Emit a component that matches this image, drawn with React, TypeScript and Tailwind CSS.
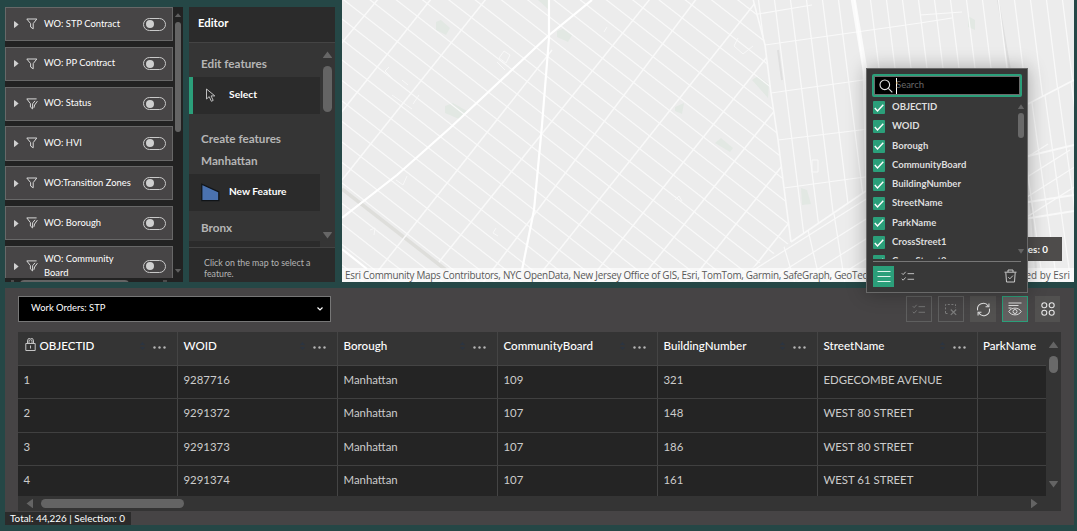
import React from "react";

type Pt = [number, number];

const filters: { name: string; edit?: boolean; wrap?: boolean }[] = [
  { name: "WO: STP Contract" },
  { name: "WO: PP Contract" },
  { name: "WO: Status", edit: true },
  { name: "WO: HVI" },
  { name: "WO:Transition Zones" },
  { name: "WO: Borough", edit: true },
  { name: "WO: Community Board", edit: true, wrap: true },
];

const fields = [
  "OBJECTID",
  "WOID",
  "Borough",
  "CommunityBoard",
  "BuildingNumber",
  "StreetName",
  "ParkName",
  "CrossStreet1",
  "CrossStreet2",
];

const columns = ["OBJECTID", "WOID", "Borough", "CommunityBoard", "BuildingNumber", "StreetName"];

const rows = [
  ["1", "9287716", "Manhattan", "109", "321", "EDGECOMBE AVENUE"],
  ["2", "9291372", "Manhattan", "107", "148", "WEST 80 STREET"],
  ["3", "9291373", "Manhattan", "107", "186", "WEST 80 STREET"],
  ["4", "9291374", "Manhattan", "107", "161", "WEST 61 STREET"],
];

function Arrow({ dir, className }: { dir: "up" | "down" | "left" | "right"; className: string }) {
  const d = {
    up: "M4.5 0.5 L9 6.5 Q9 7 8.5 7 H.5 Q0 7 0 6.5Z",
    down: "M4.5 6.5 L9 .5 Q9 0 8.5 0 H.5 Q0 0 0 .5Z",
    left: "M.5 4.5 L6.5 0 Q7 0 7 .5 V8.5 Q7 9 6.5 9Z",
    right: "M6.5 4.5 L.5 0 Q0 0 0 .5 V8.5 Q0 9 .5 9Z",
  }[dir];
  const box = dir === "up" || dir === "down" ? "0 0 9 7" : "0 0 7 9";
  return (
    <svg viewBox={box} className={className} fill="currentColor" preserveAspectRatio="none">
      <path d={d} />
    </svg>
  );
}

function Funnel({ edit }: { edit?: boolean }) {
  return (
    <svg viewBox="0 0 12 12" className="ml-[7px] h-3 w-3 shrink-0" fill="none" stroke="#d8d8d8" strokeWidth="1">
      {edit ? (
        <path d="M10.6.9H.8L4.4 5.6V9l2.2 1.9V5.8L9 2.8M11.4 3.2 8.6 7 7.9 9.8" />
      ) : (
        <path d="M.8 1h10L7.2 5.6v5.2L4.6 9V5.6z" />
      )}
    </svg>
  );
}

function Toggle() {
  return (
    <div className="mr-[6px] ml-auto flex h-[13px] w-[23px] shrink-0 items-center rounded-full border border-[#c9c9c9] pl-[2px]">
      <div className="h-2 w-2 rounded-full bg-[#cfcfcf]" />
    </div>
  );
}

function FilterPanel() {
  return (
    <div className="flex h-[275px] w-[178px] shrink-0 flex-col overflow-hidden bg-[#222222]">
      <div className="flex h-[271px] overflow-hidden">
        <div className="flex w-[168px] flex-col gap-[5.6px]">
          {filters.map((f) => (
            <div
              key={f.name}
              className={
                "flex w-[168px] shrink-0 items-center border border-[#686868] bg-[#474546] pl-[8px] " +
                (f.wrap ? "h-[41px]" : "h-[34.2px]")
              }
            >
              <Arrow dir="right" className="h-[7px] w-[5px] shrink-0 text-[#d0d0d0]" />
              <Funnel edit={f.edit} />
              <span className="-mt-px ml-[6px] w-[91px] text-[9.4px] leading-[14px] text-white">{f.name}</span>
              <Toggle />
            </div>
          ))}
        </div>
        <div className="flex w-[10px] flex-col items-center text-[#5f5f5f]">
          <Arrow dir="up" className="mt-[6px] h-[4px] w-[6px]" />
          <div className="mt-[5px] h-[110px] w-[6px] rounded-full bg-[#646464]" />
          <Arrow dir="down" className="mt-auto mb-[5px] h-[4px] w-[6px]" />
        </div>
      </div>
      <div className="flex h-[4px] items-start pt-[2px]">
        <div className="ml-[6px] h-[2px] w-[3px] bg-[#4c4c4c]" />
        <div className="ml-[6px] h-[4px] w-[109px] rounded-t-full bg-[#646464]" />
        <div className="ml-[34px] h-[2px] w-[4px] bg-[#4c4c4c]" />
      </div>
    </div>
  );
}

function EditorPanel() {
  return (
    <div className="ml-[6px] flex h-[275px] w-[146px] shrink-0 flex-col bg-[#353535]">
      <div className="flex h-[36px] shrink-0 items-center border-b border-[#444444] bg-[#2b2b2b] pl-[9px] text-[11.3px] font-bold text-white">
        <span className="-mt-[3px]">Editor</span>
      </div>
      <div className="flex h-[204px] shrink-0 overflow-hidden">
        <div className="flex w-[131px] flex-col text-[11.7px] font-bold text-[#b5b5b5]">
          <div className="h-[34px] shrink-0 pl-[12px] leading-[40px]">Edit features</div>
          <div className="flex h-[37px] shrink-0 items-center border-l-4 border-[#2b9f7a] bg-[#2b2b2b] pl-[12px]">
            <svg viewBox="0 0 13 15" className="h-[15px] w-[13px]" fill="none" stroke="#c0c0c0">
              <path d="M1.5 1v10l2.7-2.4 2.2 4.7 1.8-.9-2.1-4.5h3.7z" />
            </svg>
            <span className="-mt-px ml-[11px] text-[10.3px] text-white">Select</span>
          </div>
          <div className="h-[39px] shrink-0 pt-[4px] pl-[12px] leading-[41px]">Create features</div>
          <div className="h-[21px] shrink-0 pl-[12px] leading-[14px]">Manhattan</div>
          <div className="flex h-[37px] shrink-0 items-center bg-[#2b2b2b] pl-[12px]">
            <svg viewBox="0 0 19 19" className="h-[19px] w-[19px]">
              <path d="M.8 1.2v16.5h17V9z" fill="#4a72b0" stroke="#101418" strokeWidth="1.2" />
            </svg>
            <span className="-mt-px ml-[9px] text-[10.1px] text-white">New Feature</span>
          </div>
          <div className="h-[30px] shrink-0 pl-[12px] leading-[32px]">Bronx</div>
          <div className="h-[6px] shrink-0 bg-[#2b2b2b]" />
        </div>
        <div className="flex w-[15px] flex-col items-center text-[#666666]">
          <Arrow dir="up" className="mt-[8px] h-[7px] w-[9px]" />
          <div className="mt-[8px] h-[46px] w-[9px] rounded-full bg-[#646464]" />
          <Arrow dir="down" className="mt-auto mb-[8px] h-[7px] w-[9px]" />
        </div>
      </div>
      <div className="h-[35px] border-t border-[#444444] bg-[#2b2b2b] pt-[9px] pl-[15px] text-[8.8px] leading-[11px] text-[#b5b5b5]">
        Click on the map to select a<br />
        feature.
      </div>
    </div>
  );
}

function range(n: number) {
  return Array.from({ length: n }, (_, i) => i);
}

const avenues: [Pt, Pt][] = [
  [[-2, 45], [37, -2]],
  [[-2, 114], [93, -6]],
  [[0, 180], [148, -6]],
  [[32, 276], [210, 50]],
  [[97, 262], [312, -6]],
  [[140, 284], [358, -6]],
  [[195, 278], [425, -12]],
  [[243, 286], [475, -6]],
  [[290, 290], [535, -18]],
  [[342, 290], [560, 14]],
  [[394, 290], [610, 16]],
];

function Basemap() {
  return (
    <svg viewBox="0 0 732 282" className="block h-[282px] w-[732px]" fill="none" stroke="#f9f9f9">
      <defs>
        <clipPath id="west">
          <path d="M0 0H411L423 45L429 93L436 140L442 188L449 242L390 282H0Z" />
        </clipPath>
        <clipPath id="east">
          <path d="M411 0L423 45L429 93L436 140L442 188L449 242L540 180L732 80V0Z" />
        </clipPath>
        <clipPath id="south">
          <path d="M449 242L540 180L732 80V282H390Z" />
        </clipPath>
      </defs>
      <rect width="732" height="282" fill="#ececec" stroke="none" />
      <g fill="#e2e8e3" stroke="none">
        <path d="M94 22l5-2 9 8-4 7-10-5zM103 106l8-3 14 8-8 8-14-6zM215 31l6-2 9 6-4 7-11-5zM196 0h10v9zM333 107l9-4-2 11-7-3z" />
        <path d="M410 80l6-4 11 8-1 14zM373 143l6-5 12 10-3 4zM626 16l7 4v10l-7-3zM459 188l6 2 4 14-9 1z" />
      </g>
      <path d="M0 189 104 270" stroke="#dededb" strokeWidth="3.5" />
      <path d="M656 0 668 70 690 215 694 270M436 50 440 80" stroke="#dfdfdf" strokeWidth="2" />
      <g clipPath="url(#west)">
        <g strokeWidth="1.2">
          {range(48).map((i) => {
            const y = -350 + i * 20.5;
            return <path key={i} d={`M0 ${y}L460 ${y + 359}`} />;
          })}
        </g>
        <g strokeWidth="1.5">
          {avenues.map((a, i) => (
            <path key={i} d={`M${a[0][0]} ${a[0][1]}L${a[1][0]} ${a[1][1]}`} />
          ))}
        </g>
      </g>
      <g clipPath="url(#east)" strokeWidth="1.2">
        {range(22).map((i) => (
          <path key={i} d={`M${400 + i * 16} -4L${436 + i * 16} 284`} />
        ))}
        <path d="M423 45 578 23 610 18M429 93 535 78M436 140 535 128M442 188 530 176M578 15 620 12M410 15 470 5" />
      </g>
      <g clipPath="url(#south)" strokeWidth="1.2">
        {range(7).map((i) => (
          <path key={i} d={`M${380 + i * 22} ${290 + i * 6}L${640 + i * 22} ${126 + i * 6}`} />
        ))}
        {range(15).map((i) => (
          <path key={i} d={`M${600 + i * 14} 60L${632 + i * 14} 290`} />
        ))}
        <path d="M440 240 455 290M466 230 480 290M492 214 504 290" />
        <path d="M680 203 732 195M682 219 732 211M670 160 732 145" strokeWidth="2" />
      </g>
      <path d="M449 242 540 180 732 80M411-1 423 45 429 93 436 140 442 188 449 242" strokeWidth="1.6" />
      <path d="M511-2 523 70 526 190" stroke="#fff" strokeWidth="5" strokeOpacity=".8" />
      <path d="M0 218 55 175 108 128 206 36 250 0" stroke="#fff" strokeWidth="2.2" />
      <path d="M207 0V38L200 125 192 210 180 270" stroke="#fff" strokeWidth="2.2" />
      <path d="M0 249 25 269" stroke="#fff" strokeWidth="2.2" />
      <g stroke="#f8f8f8" strokeWidth="1">
        <path d="M47 67l-4 4 8 8M60 80l6 5M50 95l20 14M77 95l-6 9M54 180l7 5 4-9M28 230l5-2-1 7M154 228l-3 5 5 3M265 27l-3 5M396 38l-4 8 9 8 10-8M470 160h6v12h-6zM333 200l4-4 3 5" />
        <path d="M157 58l5-7 6 4-4 8zM155 62l8 8" />
      </g>
    </svg>
  );
}

function MapView() {
  return (
    <div className="relative ml-[7px] h-[282px] w-[732px] shrink-0 overflow-hidden">
      <Basemap />
      <div className="absolute right-[12px] bottom-[21px] flex h-[24px] w-[90px] items-center justify-end bg-[#4e4c4b] pr-[14px] text-[9.8px] font-bold text-white">
        Features: 0
      </div>
      <div className="absolute bottom-0 left-0 flex h-[14px] w-[732px] items-center justify-between bg-white/65 pr-[4px] pl-[3px] font-['Open_Sans',sans-serif] text-[9.9px] tracking-[-0.26px] whitespace-nowrap text-[#595959]">
        <span>Esri Community Maps Contributors, NYC OpenData, New Jersey Office of GIS, Esri, TomTom, Garmin, SafeGraph, GeoTec</span>
        <span className="tracking-normal">Powered by Esri</span>
      </div>
    </div>
  );
}

function ListCheck({ className }: { className: string }) {
  return (
    <svg viewBox="0 0 15 12" className={className} fill="none" stroke="currentColor">
      <path d="M.8 3 2.3 4.5 5 1.5M.8 9 2.3 10.5 5 7.5M7 3.5h7M7 9.5h7" />
    </svg>
  );
}

function ColumnPopup() {
  return (
    <div className="absolute top-[68px] left-[866px] flex h-[225px] w-[162px] flex-col border border-[#696969] bg-[#383838] pl-[5px] shadow-[0_0_18px_rgba(0,0,0,0.3)]">
      <div className="mt-[5px] flex h-[23px] w-[150px] shrink-0 items-center rounded-[2px] border-2 border-[#2b9f7a] bg-black">
        <div className="flex h-full w-full items-center border border-[#6b6b6b] pl-[4px]">
          <svg viewBox="0 0 14 14" className="h-[14px] w-[14px]" fill="none" stroke="#e6e6e6" strokeWidth="1.1">
            <circle cx="5.8" cy="5.8" r="4.8" />
            <path d="m9.3 9.3 4 4" />
          </svg>
          <div className="ml-[3px] h-4 w-px bg-white" />
          <span className="-ml-px text-[9.5px] text-[#686868]">Search</span>
        </div>
      </div>
      <div className="mt-[2px] flex h-[160px] shrink-0">
        <div className="flex w-[145px] flex-col overflow-hidden pl-px">
          {fields.map((f) => (
            <div key={f} className="flex h-[19.3px] shrink-0 items-start">
              <div className="mt-[2px] flex h-[13px] w-[12px] items-center justify-center rounded-[1px] bg-[#2b9f7a]">
                <svg viewBox="0 0 10 8" className="h-[8px] w-[10px]" fill="none" stroke="#fff" strokeWidth="1.4">
                  <path d="m.8 4 2.7 3L9.3.8" />
                </svg>
              </div>
              <span className="ml-[7px] text-[9.5px] leading-[16px] font-bold text-[#dedede]">{f}</span>
            </div>
          ))}
        </div>
        <div className="flex w-[12px] flex-col items-center text-[#646464]">
          <Arrow dir="up" className="mt-[5px] h-[5px] w-[6px]" />
          <div className="mt-[4px] h-[25px] w-[6px] rounded-full bg-[#696969]" />
          <Arrow dir="down" className="mt-auto mb-[5px] h-[5px] w-[6px]" />
        </div>
      </div>
      <div className="mt-[2px] ml-px h-px w-[148px] shrink-0 bg-[#777777]" />
      <div className="mt-[3px] ml-px flex h-[22px] items-center">
        <div className="flex h-[21px] w-[21px] items-center justify-center bg-[#2b9f7a]">
          <svg viewBox="0 0 14 12" className="h-[12px] w-[14px]" stroke="#dff3ec">
            <path d="M.5 1.5h13M.5 6.5h13M.5 11.5h13" />
          </svg>
        </div>
        <ListCheck className="ml-[7px] h-[12px] w-[14px] text-[#c9c9c9]" />
        <svg viewBox="0 0 13 14" className="mr-[10px] ml-auto h-[14px] w-[13px]" fill="none" stroke="#c9c9c9">
          <path d="M.5 3.2h12M4 3V1h5v2M1.8 3.5 2.5 13h8l.7-9.5M4.3 8.2l1.6 1.6 3-3.2" />
        </svg>
      </div>
    </div>
  );
}

function Toolbar() {
  const base = "flex h-[26px] w-[26px] items-center justify-center ";
  return (
    <div className="ml-auto flex gap-[6px] pr-[14px]">
      <div className={base + "border border-[#5f5f5f]"}>
        <ListCheck className="h-[12px] w-[14px] text-[#777777]" />
      </div>
      <div className={base + "border border-[#5f5f5f]"}>
        <svg viewBox="0 0 14 14" className="h-[14px] w-[14px]" fill="none" stroke="#7c7c7c">
          <path d="M1.5 11V2.5h10V6" strokeDasharray="2 1.6" />
          <path d="M1.5 11.5h3" strokeDasharray="2 1" />
          <path d="m6.8 7.5 5.4 5.4m0-5.4-5.4 5.4" strokeWidth="1.2" />
        </svg>
      </div>
      <div className={base + "bg-[#525150]"}>
        <svg viewBox="0 0 16 16" className="h-[15px] w-[15px]" fill="none" stroke="#e0e0e0" strokeWidth="1.1">
          <path d="M1.8 9A6.2 6.2 0 0 1 13 4.2M14.2 7A6.2 6.2 0 0 1 3 11.8" />
          <path d="M13.8 1.5v3.6h-3.6M2.2 14.5v-3.6h3.6" />
        </svg>
      </div>
      <div className={base + "border border-[#2b9f7a] bg-[#626060]"}>
        <svg viewBox="0 0 14 14" className="h-[14px] w-[14px]" fill="none" stroke="#dcdcdc">
          <path d="M.5 1h13M.5 3.5h10M.5 6h3" />
          <path d="M.8 9.5C3.5 5 10.5 5 13.2 9.5 10.5 14 3.5 14 .8 9.5z" />
          <circle cx="7" cy="9.5" r="2" />
        </svg>
      </div>
      <div className="ml-px flex h-[26px] w-[25px] items-center justify-center bg-[#525150]">
        <svg viewBox="0 0 14 14" className="h-[14px] w-[14px]" fill="none" stroke="#e4e4e4" strokeWidth="1.1">
          <circle cx="3.3" cy="3.3" r="2.5" />
          <circle cx="10.7" cy="3.3" r="2.5" />
          <circle cx="3.3" cy="10.7" r="2.5" />
          <circle cx="10.7" cy="10.7" r="2.5" />
        </svg>
      </div>
    </div>
  );
}

function DataTable() {
  return (
    <div className="mt-[10px] ml-[13px] flex h-[179px] w-[1043px] shrink-0 flex-col bg-[#343434]">
      <div className="flex h-[164px]">
        <div className="flex w-[1028px] flex-col overflow-hidden">
          <div className="flex h-[34px] shrink-0 border-b border-[#444444] text-[11.6px] font-medium text-white">
            {columns.map((c, i) => (
              <div key={c} className="flex w-[160px] shrink-0 items-center border-r border-[#444444] pl-[5.5px]">
                {i === 0 && (
                  <svg viewBox="0 0 11 13" className="-mt-[8px] mr-[4px] ml-[1px] h-[13px] w-[11px]" fill="none" stroke="#c4c4c4">
                    <path d="M.8 5.5h9.4v7H.8zM2.5 5.5V3a3 3 0 0 1 6 0v2.5M4 5.5V3.2a1.5 1.5 0 0 1 3 0v2.3M5.5 7.5v3" />
                  </svg>
                )}
                <span className="-mt-[5px]">{c}</span>
                <div className="mr-[11px] ml-auto flex items-center">
                  <svg viewBox="0 0 5 8" className="mr-[8px] -mt-[6px] h-[8px] w-[5px]" fill="#2b3440">
                    <path d="M2.5 0 5 3H0zM2.5 8 5 5H0z" />
                  </svg>
                  <svg viewBox="0 0 13 3" className="-mt-[3px] h-[3px] w-[13px]" fill="#b4b4b4">
                    <circle cx="1.5" cy="1.5" r="1.2" />
                    <circle cx="6.5" cy="1.5" r="1.2" />
                    <circle cx="11.5" cy="1.5" r="1.2" />
                  </svg>
                </div>
              </div>
            ))}
            <div className="flex items-center pl-[5px]">
              <span className="-mt-[5px]">ParkName</span>
            </div>
          </div>
          {rows.map((r) => (
            <div
              key={r[0]}
              className="flex h-[33.3px] shrink-0 border-b border-[#404040] bg-[#242424] text-[11.4px] text-[#cccccc]"
            >
              {r.map((v, i) => (
                <div key={i} className="flex w-[160px] shrink-0 items-center border-r border-[#444444] pl-[5.5px]">
                  <span className="-mt-[5px] whitespace-nowrap">{v}</span>
                </div>
              ))}
            </div>
          ))}
        </div>
        <div className="flex w-[15px] flex-col items-center text-[#646464]">
          <Arrow dir="up" className="mt-[9px] h-[7px] w-[9px]" />
          <div className="mt-[8px] h-[17px] w-[9px] rounded-full bg-[#696969]" />
          <Arrow dir="down" className="mt-auto mb-[8px] h-[7px] w-[9px]" />
        </div>
      </div>
      <div className="flex h-[15px] items-center text-[#646464]">
        <Arrow dir="left" className="ml-[8px] h-[9px] w-[7px]" />
        <div className="ml-[8px] h-[9px] w-[143px] rounded-full bg-[#646464]" />
        <Arrow dir="right" className="mr-[23px] ml-auto h-[9px] w-[7px]" />
      </div>
    </div>
  );
}

export default function App() {
  return (
    <div className="relative h-[531px] w-[1077px] overflow-hidden bg-[#254746] font-['Lato',sans-serif]">
      <div className="flex h-[282px] pl-[5px]">
        <div className="flex pt-[7px]">
          <FilterPanel />
          <EditorPanel />
        </div>
        <MapView />
      </div>
      <div className="mt-[6px] ml-[5px] flex h-[237px] w-[1069px] flex-col bg-[#464445]">
        <div className="mt-[8px] flex h-[26px] shrink-0">
          <div className="ml-[13px] flex h-[26px] w-[313px] items-center justify-between border border-[#777777] bg-black pr-[7px] pl-[12px] text-[9.4px] text-white">
            <span className="-mt-[2px]">Work Orders: STP</span>
            <svg viewBox="0 0 6 4" className="h-[4px] w-[6px]" fill="none" stroke="#fff" strokeWidth="1.2">
              <path d="m.5.5 2.5 2.5L5.5.5" />
            </svg>
          </div>
          <Toolbar />
        </div>
        <DataTable />
        <div className="mt-[1px] flex h-[13px] w-[126px] items-center bg-[#2b2b2b] pl-[5px] text-[9.9px] whitespace-nowrap text-white">
          Total: 44,226 | Selection: 0
        </div>
      </div>
      <ColumnPopup />
    </div>
  );
}
